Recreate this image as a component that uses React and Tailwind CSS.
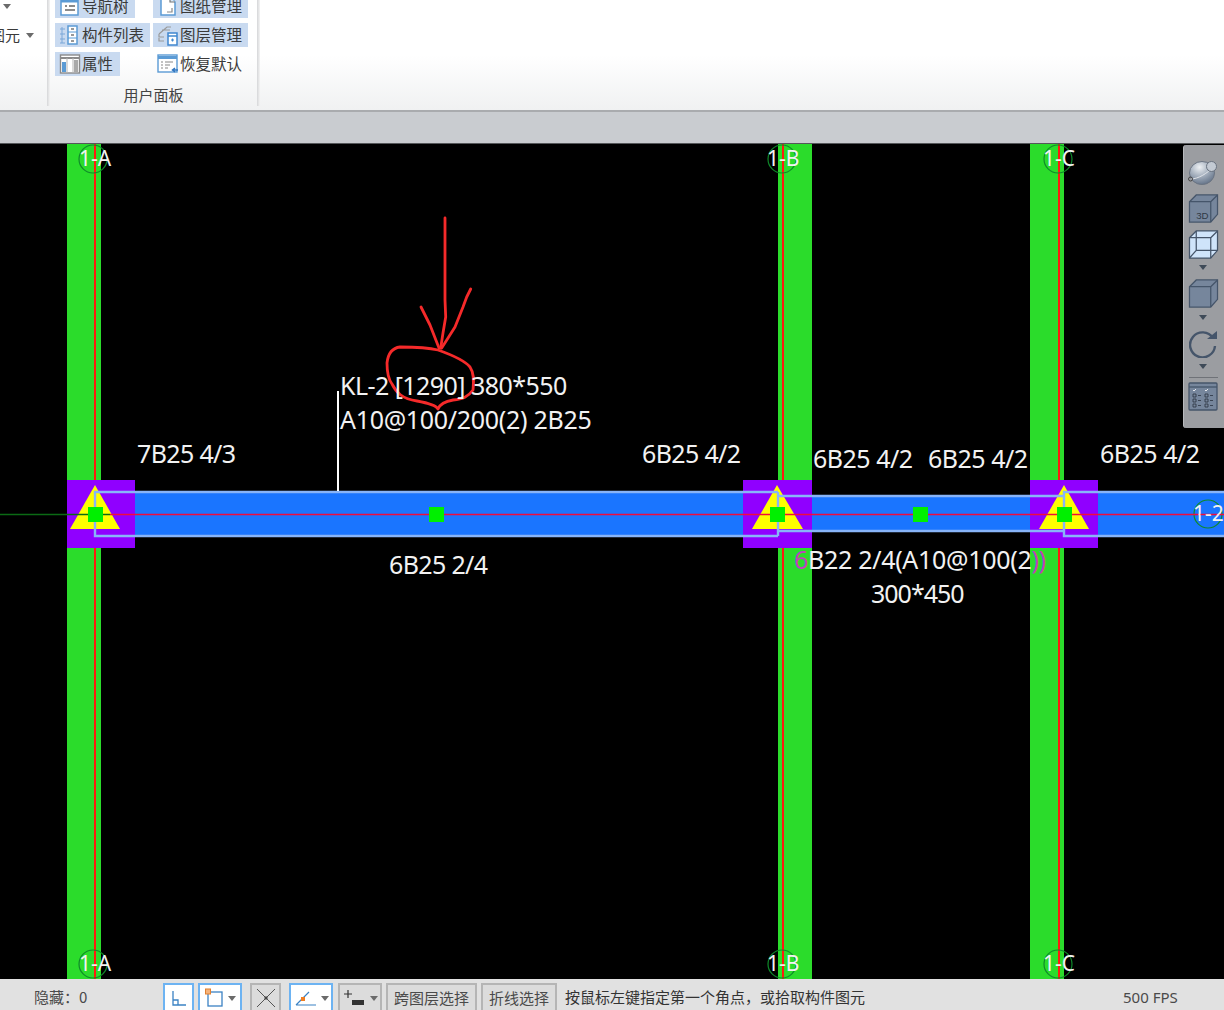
import React from 'react';

const CJK = '"Noto Sans CJK SC", "Noto Sans", sans-serif';

const Caret = ({ className = '', color = '#6b6b6b' }) => (
  <svg width="8" height="5" viewBox="0 0 8 5" className={className}>
    <path d="M0 0h8L4 5z" fill={color} />
  </svg>
);

const PanelIcon = ({ kind }) => {
  if (kind === 'tree') {
    return (
      <svg width="22" height="22" viewBox="0 0 22 22">
        <rect x="2" y="2" width="17" height="18" fill="#fff" stroke="#5b9bd5" strokeWidth="1.5" />
        <path d="M2 6h17" stroke="#5b9bd5" strokeWidth="3" />
        <path d="M6 11h2M6 15h10M10 11h6" stroke="#666" strokeWidth="1.5" />
      </svg>
    );
  }
  if (kind === 'paper') {
    return (
      <svg width="22" height="22" viewBox="0 0 22 22">
        <path d="M4 2h9l5 5v13H4z" fill="#fff" stroke="#5b9bd5" strokeWidth="1.5" />
        <path d="M13 2v5h5" fill="#dbe8f6" stroke="#777" strokeWidth="1.2" />
        <path d="M10 17h5v-4" fill="none" stroke="#888" strokeWidth="1.2" />
      </svg>
    );
  }
  if (kind === 'list') {
    return (
      <svg width="22" height="22" viewBox="0 0 22 22">
        <rect x="9" y="2" width="9" height="18" fill="#fff" stroke="#5b9bd5" strokeWidth="1.5" />
        <path d="M9 8h9M9 14h9" stroke="#5b9bd5" strokeWidth="1.2" />
        <path d="M12 5h3M12 11h3M12 17h3" stroke="#777" strokeWidth="1.6" />
        <path d="M3 3v16M1 5h5M1 10h5M1 15h5M1 19h5" fill="none" stroke="#7aa7d8" strokeWidth="1" />
      </svg>
    );
  }
  if (kind === 'layer') {
    return (
      <svg width="22" height="22" viewBox="0 0 22 22">
        <path d="M2 10l8-7h4M2 10v3h5M2 14v3h5M5 6h8" fill="none" stroke="#999" strokeWidth="1.2" />
        <rect x="11" y="9" width="9" height="12" fill="#fff" stroke="#3f87cf" strokeWidth="1.5" />
        <path d="M11 12h9" stroke="#3f87cf" strokeWidth="1.5" />
        <path d="M14 16h3M15.5 14.5v3" stroke="#3f87cf" strokeWidth="1.2" />
      </svg>
    );
  }
  if (kind === 'attr') {
    return (
      <svg width="22" height="22" viewBox="0 0 22 22">
        <rect x="1.5" y="2" width="19" height="18" fill="#fff" stroke="#8a8a8a" strokeWidth="1.4" />
        <path d="M1.5 5h19" stroke="#8a8a8a" strokeWidth="2" />
        <path d="M8 5v15M14 5v15" stroke="#b5b5b5" strokeWidth="1" />
        <rect x="3" y="9" width="4" height="10" fill="#5b9bd5" />
        <rect x="15" y="7" width="4" height="12" fill="#a9a9a9" />
      </svg>
    );
  }
  return (
    <svg width="22" height="22" viewBox="0 0 22 22">
      <rect x="1" y="2" width="19" height="17" fill="#fff" stroke="#5b9bd5" strokeWidth="1.4" />
      <path d="M1 4.5h19" stroke="#5b9bd5" strokeWidth="3" />
      <path d="M4 9h2M8 9h8M4 12h2M8 12h5M4 15h2M8 15h3" stroke="#888" strokeWidth="1.2" />
      <path d="M21 17h-5m2-2l-2.500 2 2.500 2" fill="none" stroke="#2f75c0" strokeWidth="1.500" />
    </svg>
  );
};

const PanelButton = ({ kind, label, width, active }) => (
  <div
    className={`flex items-center h-6 pl-1 gap-px text-[15.5px] leading-5 text-[#3a3a3a] whitespace-nowrap ${active ? 'bg-[#c9daf0]' : ''}`}
    style={{ width }}
  >
    <PanelIcon kind={kind} />
    <span className="-mt-0.5">{label}</span>
  </div>
);

const Ribbon = () => (
  <div className="relative h-[110px] shrink-0 overflow-hidden bg-gradient-to-b from-white via-white to-[#f0f1f2]" style={{ fontFamily: CJK }}>
    <div className="flex h-full">
      <div className="w-[47px] shrink-0 relative">
        <Caret className="absolute left-[3px] top-[4px]" />
        <div className="absolute -left-[10px] top-[24px] flex items-center gap-[6px] text-[15px] text-[#3a3a3a]">
          <span>图元</span>
          <Caret />
        </div>
      </div>
      <div className="w-[3px] h-[106px] bg-gradient-to-r from-[#d5d6d8] to-[#f4f4f4]" />
      <div className="w-[207px] shrink-0 flex flex-col">
        <div className="flex flex-col gap-[5px] pl-[5px] -mt-[6px]">
          <div className="flex gap-[18px]">
            <PanelButton kind="tree" label="导航树" width="80px" active />
            <PanelButton kind="paper" label="图纸管理" width="95px" active />
          </div>
          <div className="flex gap-[3px]">
            <PanelButton kind="list" label="构件列表" width="95px" active />
            <PanelButton kind="layer" label="图层管理" width="95px" active />
          </div>
          <div className="flex gap-[33px]">
            <PanelButton kind="attr" label="属性" width="65px" active />
            <PanelButton kind="restore" label="恢复默认" width="95px" />
          </div>
        </div>
        <div className="mt-[9px] text-center text-[15px] leading-5 text-[#444]">用户面板</div>
      </div>
      <div className="w-[3px] h-[106px] bg-gradient-to-r from-[#d5d6d8] to-[#f4f4f4]" />
    </div>
  </div>
);

const NavBar = () => (
  <div className="absolute right-0 top-px w-[41px] h-[283px] rounded-l-[3px] bg-[#9b9da1] border-l border-[#b8babd] pr-[2px] flex flex-col items-center">
    <svg width="30" height="26" viewBox="0 0 30 26" className="mt-[14px]">
      <defs>
        <radialGradient id="ball" cx="0.4" cy="0.25" r="0.8">
          <stop offset="0" stopColor="#eef1f4" />
          <stop offset="0.5" stopColor="#a3aebc" />
          <stop offset="1" stopColor="#5f6f85" />
        </radialGradient>
      </defs>
      <ellipse cx="14" cy="14" rx="12.500" ry="11.500" fill="url(#ball)" stroke="#6b7482" />
      <path d="M3 20C10 20 20 14 25 8" fill="none" stroke="#dfe3e8" strokeWidth="1" />
      <circle cx="23.500" cy="7.500" r="5" fill="#c3cad3" stroke="#69727f" />
      <circle cx="2.500" cy="20" r="2" fill="none" stroke="#444" />
    </svg>
    <svg width="31" height="29" viewBox="0 0 31 30" className="mt-[9px]">
      <path d="M1 8l7-7h22v20l-7 8H1z" fill="#76869c" stroke="#45556a" strokeWidth="1.300" />
      <path d="M1 8h22v21M23 8l7-7" fill="none" stroke="#45556a" strokeWidth="1.300" />
      <text x="8" y="26" fontSize="10" fill="#2f3945" fontFamily="Liberation Sans, sans-serif">3D</text>
    </svg>
    <svg width="31" height="29" viewBox="0 0 31 30" className="mt-[7px]">
      <path d="M1 8l7-7h22v20l-7 8H1z" fill="#cfe4fa" stroke="#45556a" strokeWidth="1.300" />
      <path d="M1 8h22v21M23 8l7-7M8 1v20h22M8 21l-7 8" fill="none" stroke="#45556a" strokeWidth="1.300" />
    </svg>
    <Caret className="mt-[6px]" color="#3e4a58" />
    <svg width="31" height="29" viewBox="0 0 31 30" className="mt-[9px]">
      <path d="M1 8l7-7h22v20l-7 8H1z" fill="#76869c" stroke="#45556a" strokeWidth="1.300" />
      <path d="M1 8h22v21M23 8l7-7" fill="none" stroke="#45556a" strokeWidth="1.300" />
    </svg>
    <Caret className="mt-[7px]" color="#3e4a58" />
    <svg width="29" height="29" viewBox="0 0 29 29" className="mt-[9px]">
      <path d="M24 9A12.500 12.500 0 1 0 26 17" fill="none" stroke="#45556a" strokeWidth="2.400" />
      <path d="M18 10h10V2z" fill="#45556a" />
    </svg>
    <Caret className="mt-[6px]" color="#3e4a58" />
    <div className="w-[29px] h-px bg-[#6f7278] mt-[8px]" />
    <svg width="30" height="29" viewBox="0 0 30 29" className="mt-[4px]">
      <rect x="1" y="1" width="28" height="27" rx="1" fill="#76869c" stroke="#45556a" strokeWidth="1.300" />
      <path d="M1 5h28" stroke="#45556a" strokeWidth="1.300" />
      <path d="M5 8l1 1 2-2M17 8l1 1 2-2" fill="none" stroke="#fff" strokeWidth="0.800" />
      <path d="M5 12h3v3H5zM5 17h3v3H5zM5 22h3v3H5zM17 12h3v3h-3zM17 17h3v3h-3zM17 22h3v3h-3z" fill="none" stroke="#2b3440" strokeWidth="0.800" />
      <path d="M10 13.500h3M10 18.500h3M10 23.500h3M22 13.500h3M22 18.500h3M22 23.500h3" stroke="#2b3440" strokeWidth="0.800" />
    </svg>
  </div>
);

// y values below are page coordinates, the viewBox starts at the canvas top
const Drawing = () => (
  <svg className="absolute inset-0" width="1224" height="835" viewBox="0 144 1224 835">
    {/* columns */}
    <rect x="67" y="144" width="34" height="835" fill="#2bdc2b" />
    <rect x="778" y="144" width="34" height="835" fill="#2bdc2b" />
    <rect x="1030" y="144" width="34" height="835" fill="#2bdc2b" />
    {/* beams */}
    <rect x="95" y="492" width="684" height="44" fill="#1a75ff" />
    <rect x="777" y="496" width="287" height="35" fill="#1a75ff" />
    <rect x="1063" y="492" width="161" height="44" fill="#1a75ff" />
    {/* column centre lines */}
    <path d="M95 144V979M783 144V979M1059 144V979" stroke="#ff1a10" strokeWidth="2" />
    {/* axis bubbles */}
    <g fill="none" stroke="#0f8a2a" strokeWidth="1.200">
      <circle cx="93" cy="159" r="14" />
      <circle cx="782" cy="159" r="14" />
      <circle cx="1058" cy="159" r="14" />
      <circle cx="93" cy="964" r="14" />
      <circle cx="782" cy="964" r="14" />
      <circle cx="1058" cy="964" r="14" />
      <circle cx="1208" cy="514" r="14" />
    </g>
    {/* support blocks */}
    <rect x="67" y="480" width="68" height="68" fill="#9000ff" />
    <rect x="743" y="480" width="69" height="68" fill="#9000ff" />
    <rect x="1030" y="480" width="68" height="68" fill="#9000ff" />
    <path d="M95 485L120 529H70z" fill="#ffff00" />
    <path d="M777 485L803 529H752z" fill="#ffff00" />
    <path d="M1064 485L1089 529H1039z" fill="#ffff00" />
    {/* beam axis */}
    <path d="M0 514.500H110" stroke="#0b6a14" strokeWidth="1.300" />
    <path d="M110 514.500H1224" stroke="#f00c3c" strokeWidth="1.500" />
    {/* beam outlines */}
    <g fill="none" stroke="#88b4f8" strokeWidth="2.400">
      <path d="M1224 492H1064V536H1224" />
      <path d="M778 492H95V536H778" />
      <path d="M778 492V536" />
      <path d="M778 496H1064M778 531H1064" />
    </g>
    {/* span markers */}
    <g fill="#00f000">
      <rect x="88" y="507" width="15" height="15" />
      <rect x="770" y="507" width="15" height="15" />
      <rect x="1057" y="507" width="15" height="15" />
      <rect x="913" y="507" width="15" height="15" />
      <rect x="429" y="507" width="15" height="15" />
    </g>
    <path d="M338 391V491" stroke="#fff" strokeWidth="2" />
    {/* hand drawn arrow and circle */}
    <g fill="none" stroke="#f52a2a" strokeWidth="2.800" strokeLinecap="round" strokeLinejoin="round">
      <path d="M445 218V300L445.700 317 443 333 440.700 348" />
      <path d="M421 307L430 325 439 348" />
      <path d="M470.700 289L466.700 297 463 307 455 327 441.700 348" />
      <path d="M438 350C430 348 415 347 400 347C392 348 388 354 387 363C387 372 389 380 392 384C396 392 402 399 417 401C428 403 436 405 438 409C440 404 447 401 453 400C463 399 468 397 473 390C474 380 474 373 470 367C465 361 455 356 438 350Z" />
    </g>
  </svg>
);

const labels = [
  { text: '7B25 4/3', left: 137, top: 293, cls: 'tracking-[-0.65px]' },
  { text: '6B25 4/2', left: 642, top: 293, cls: 'tracking-[-0.65px]' },
  { text: '6B25 4/2', left: 813, top: 298, cls: 'tracking-[-0.5px]' },
  { text: '6B25 4/2', left: 928, top: 298, cls: 'tracking-[-0.5px]' },
  { text: '6B25 4/2', left: 1100, top: 293, cls: 'tracking-[-0.5px]' },
  { text: '6B25 2/4', left: 389, top: 404, cls: 'tracking-[-0.65px]' },
  { text: '300*450', left: 871, top: 433, cls: 'tracking-[-1px]' },
  { text: 'KL-2 [1290] 380*550', left: 340, top: 225, cls: 'tracking-[-0.55px]' },
  { text: 'A10@100/200(2) 2B25', left: 340, top: 259, cls: 'tracking-[-0.3px]' },
];

const axisLabels = [
  { text: '1-A', left: 79, top: 0 },
  { text: '1-B', left: 767, top: 0 },
  { text: '1-C', left: 1043, top: 0 },
  { text: '1-A', left: 79, top: 805 },
  { text: '1-B', left: 767, top: 805 },
  { text: '1-C', left: 1043, top: 805 },
  { text: '1-2', left: 1193, top: 355 },
];

const Canvas = () => (
  <div className="relative flex-1 bg-black overflow-hidden" style={{ fontFamily: '"Noto Sans", sans-serif' }}>
    <Drawing />
    {labels.map((l) => (
      <div
        key={l.text + l.left}
        className={`absolute text-[25px] leading-8 text-[#f2f2f2] whitespace-nowrap ${l.cls}`}
        style={{ left: l.left, top: l.top }}
      >
        {l.text}
      </div>
    ))}
    <div className="absolute left-[794px] top-[399px] text-[25px] leading-8 text-[#f2f2f2] whitespace-nowrap tracking-[-0.3px]">
      <span className="text-[#c040c0]">6</span>B22 2/4(A10@100(2<span className="text-[#c040c0]">))</span>
    </div>
    {axisLabels.map((l) => (
      <div
        key={l.text + l.top + l.left}
        className="absolute text-[21px] leading-7 text-[#f2f2f2] whitespace-nowrap"
        style={{ left: l.left, top: l.top }}
      >
        {l.text}
      </div>
    ))}
    <NavBar />
  </div>
);

const StatusButton = ({ children, width, on }) => (
  <div
    className={`flex items-center justify-center h-[30px] border-2 shrink-0 ${on ? 'bg-white border-[#6db3f2]' : 'bg-[#dcdcdc] border-[#b5b5b5]'}`}
    style={{ width }}
  >
    {children}
  </div>
);

const StatusBar = () => (
  <div className="relative h-[31px] shrink-0 overflow-hidden bg-[#e1e1e1] text-[15px] text-[#4a4a4a] pt-1 flex items-start" style={{ fontFamily: CJK }}>
    <span className="ml-[34px] w-[129px] leading-7 shrink-0 whitespace-pre">隐藏：0</span>
    <StatusButton width="31px" on>
      <svg width="18" height="18" viewBox="0 0 18 18"><path d="M3 2v14h13M3 11h5v5" fill="none" stroke="#3b82c4" strokeWidth="1.300" /></svg>
    </StatusButton>
    <div className="ml-1">
      <StatusButton width="44px" on>
        <svg width="18" height="20" viewBox="0 0 18 20"><rect x="3" y="4" width="14" height="14" fill="none" stroke="#3b82c4" strokeWidth="1.300" /><rect x="0.500" y="1" width="5" height="5" fill="#f5b27a" stroke="#e08030" /></svg>
        <Caret className="ml-[5px]" />
      </StatusButton>
    </div>
    <div className="ml-2">
      <StatusButton width="31px">
        <svg width="20" height="20" viewBox="0 0 20 20"><path d="M1 1l18 18M19 1L1 19" stroke="#555" strokeWidth="1" /><rect x="8.500" y="8.500" width="3" height="3" fill="#444" /></svg>
      </StatusButton>
    </div>
    <div className="ml-2">
      <StatusButton width="44px" on>
        <svg width="22" height="18" viewBox="0 0 22 18"><path d="M2 16h20M2 16L15 3" fill="none" stroke="#3b82c4" strokeWidth="1.200" /><rect x="7" y="8" width="4" height="4" fill="#ef7d22" /></svg>
        <Caret className="ml-[5px]" />
      </StatusButton>
    </div>
    <div className="ml-[5px]">
      <StatusButton width="44px">
        <svg width="22" height="18" viewBox="0 0 22 18"><path d="M1 5h8M5 1v8" stroke="#333" strokeWidth="1.200" /><rect x="9" y="11" width="12" height="5" fill="#333" /></svg>
        <Caret className="ml-[5px]" />
      </StatusButton>
    </div>
    <div className="ml-[4px]">
      <StatusButton width="91px">跨图层选择</StatusButton>
    </div>
    <div className="ml-[4px]">
      <StatusButton width="76px">折线选择</StatusButton>
    </div>
    <span className="ml-2 leading-7 text-[#333] whitespace-nowrap">按鼠标左键指定第一个角点，或拾取构件图元</span>
    <span className="absolute left-[1123px] top-1 leading-7" style={{ fontFamily: '"Noto Sans", sans-serif' }}>500 FPS</span>
  </div>
);

export default function App() {
  return (
    <div className="w-[1224px] h-[1010px] flex flex-col overflow-hidden bg-white">
      <Ribbon />
      <div className="h-[34px] shrink-0 bg-[#c9ccd0] border-t-2 border-b border-t-[#a9abae] border-b-[#55575a]" />
      <Canvas />
      <StatusBar />
    </div>
  );
}
